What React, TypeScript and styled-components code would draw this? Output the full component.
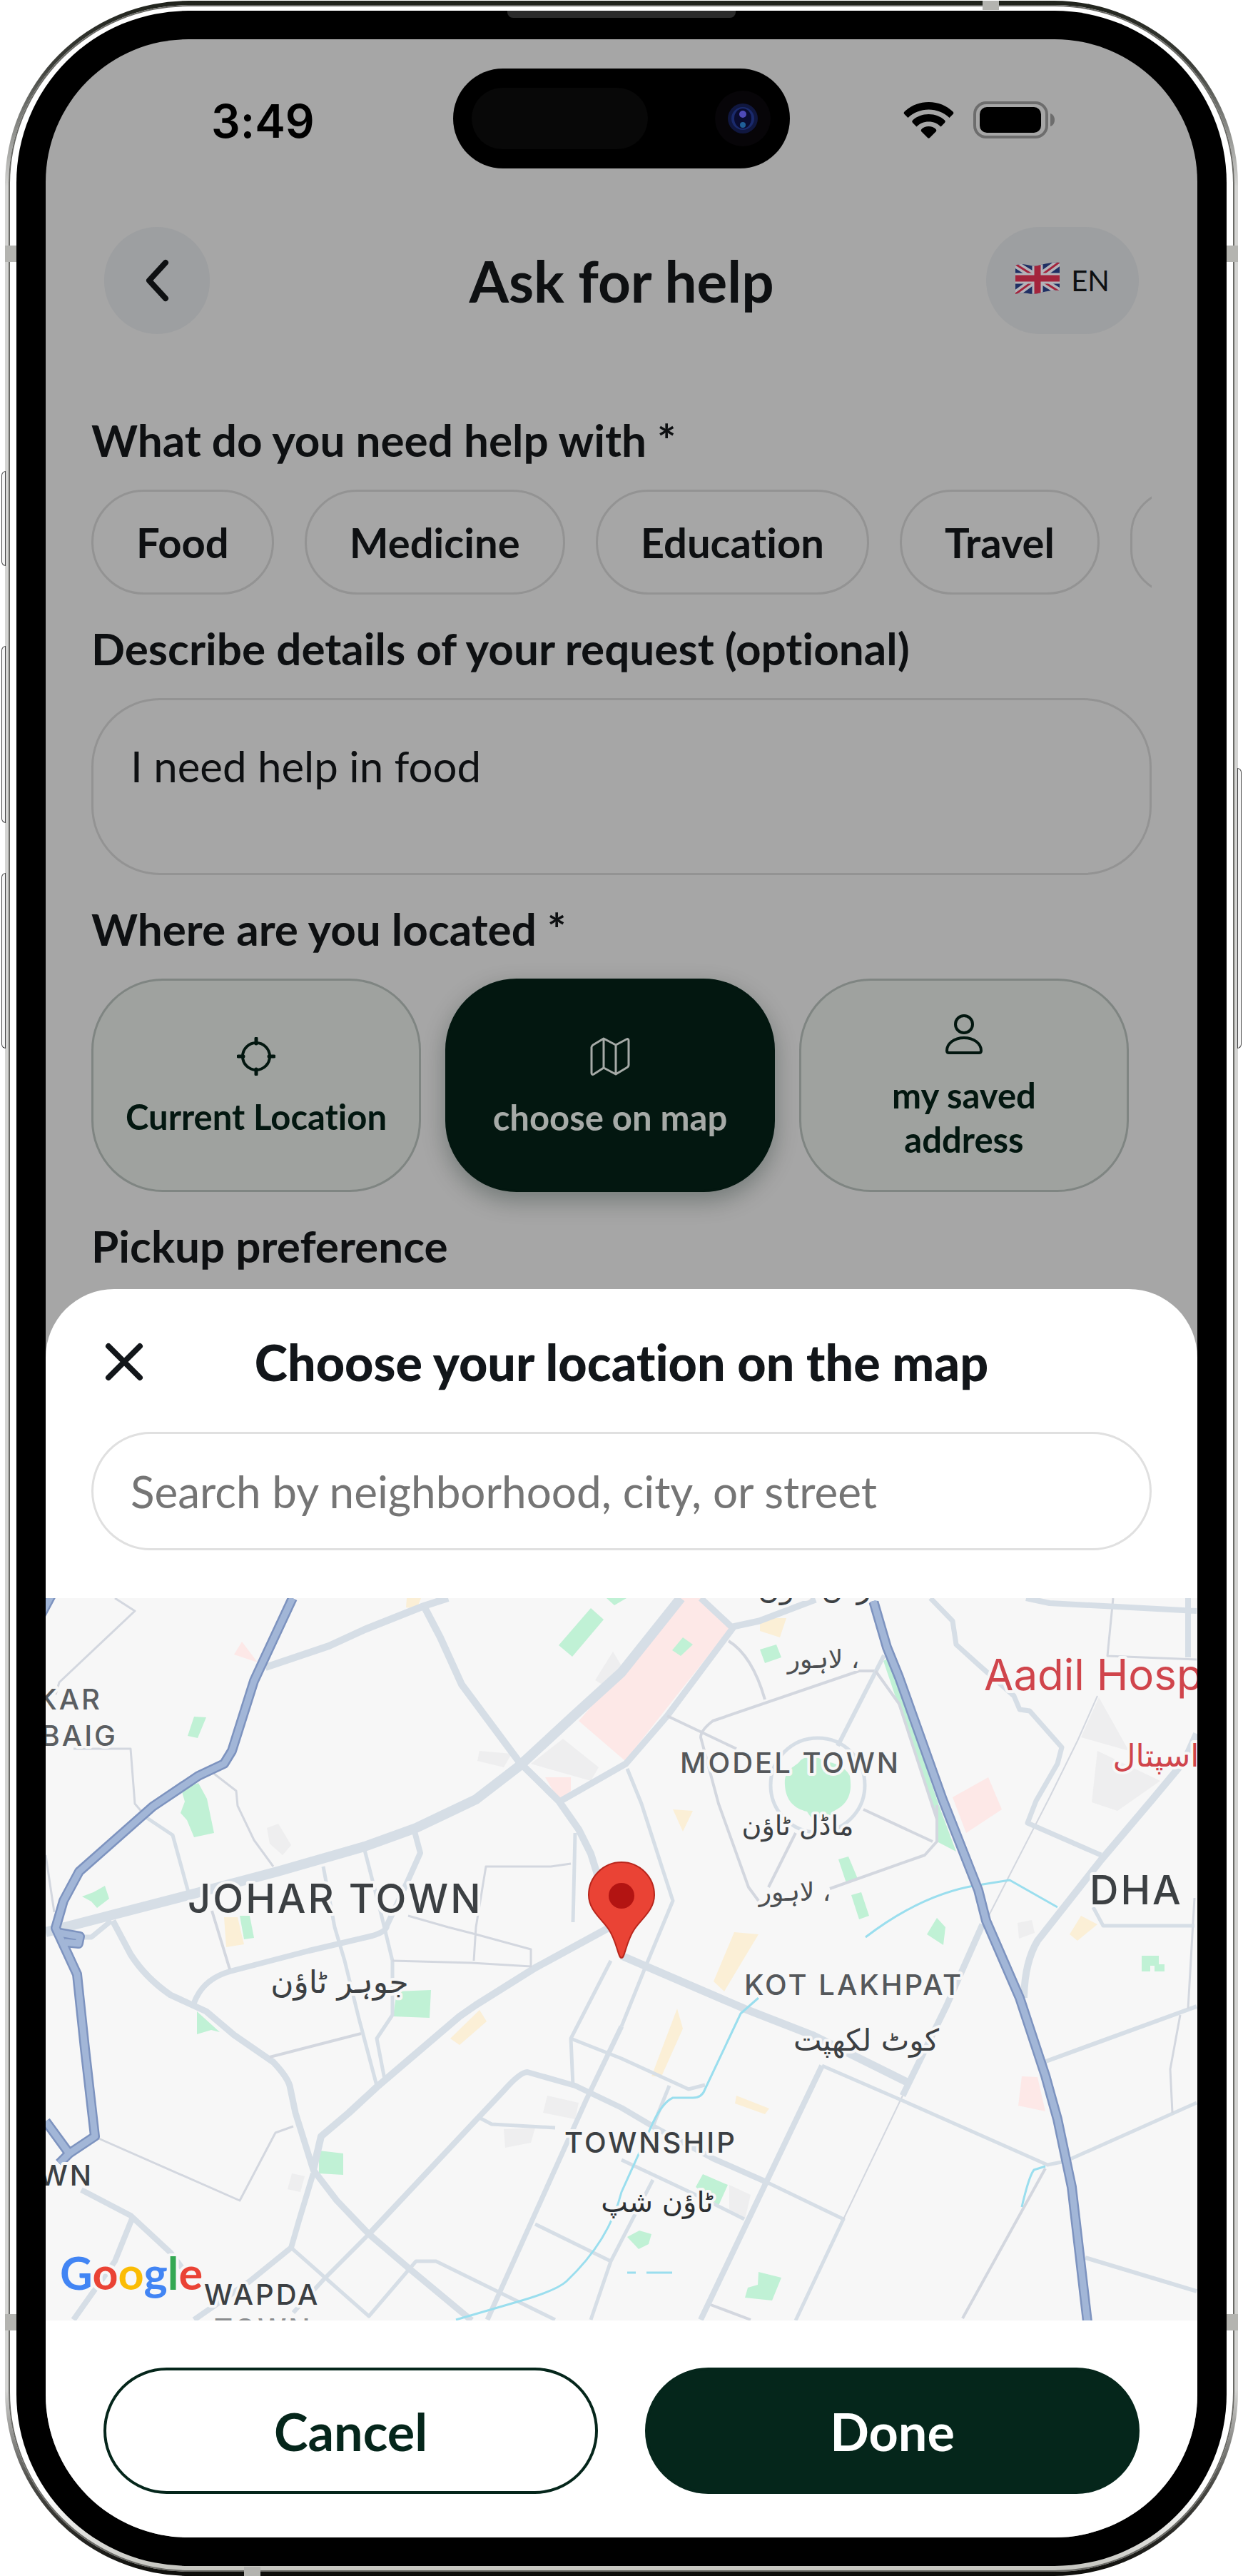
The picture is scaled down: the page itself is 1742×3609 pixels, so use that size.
import React, { FC, useState } from 'react'
import styled, { createGlobalStyle, css } from 'styled-components'

const GlobalStyle = createGlobalStyle`
    * {
        box-sizing: border-box;
    }

    body {
        margin: 0;
        background: #fff;
        font-family: Lato, 'Open Sans', sans-serif;
        font-variant-ligatures: none;
    }

    button,
    input,
    textarea {
        margin: 0;
        font-family: inherit;
        font-variant-ligatures: inherit;
    }
`

const Page = styled.main`
    padding: 1px 7px;
`

const Phone = styled.div`
    position: relative;
    padding: 6px 5px;
    border-radius: 258px;
    background: linear-gradient(
        180deg,
        #20231c 0,
        #3b3d38 90px,
        #d4d4d2 260px,
        #d4d4d2 calc(100% - 260px),
        #4a4a46 calc(100% - 130px),
        #0d0d0a 100%
    );
`

const Rail = styled.div`
    padding: 8px 11px;
    border-radius: 252px;
    background: linear-gradient(180deg, #fff 0, #fff 97%, #c4c4be 100%);
    box-shadow: inset 0 0 0 2px #6a6a66;
`

const Bezel = styled.div`
    position: relative;
    padding: 40px 41px;
    border-radius: 241px;
    background: #000;
`

const Earpiece = styled.div`
    position: absolute;
    top: 0;
    left: 50%;
    width: 320px;
    height: 10px;
    margin-left: -160px;
    border-radius: 0 0 8px 8px;
    background: #2b2b2b;
`

const SideButton = styled.span<{ $side: 'left' | 'right'; $top: number; $size: number }>`
    position: absolute;
    ${({ $side }) => $side}: -5px;
    top: ${({ $top }) => $top}px;
    width: 6px;
    height: ${({ $size }) => $size}px;
    border: 1px solid #444;
    border-radius: ${({ $side }) => ($side === 'left' ? '6px 0 0 6px' : '0 6px 6px 0')};
    background: #f4f4f4;
`

const Band = styled.span<{ $edge: 'left' | 'right' | 'top' | 'bottom'; $at: string }>`
    position: absolute;
    background: #b4b4b0;
    ${({ $edge, $at }) =>
        $edge === 'left' || $edge === 'right'
            ? css`
                  ${$edge}: 0;
                  top: ${$at};
                  width: 16px;
                  height: 23px;
              `
            : css`
                  ${$edge}: 0;
                  left: ${$at};
                  width: 23px;
                  height: 13px;
              `}
`

const Screen = styled.div`
    overflow: hidden;
    border-radius: 200px;
    background: #a6a6a6;
    color: #0e1012;
`

const StatusBar = styled.div`
    display: grid;
    grid-template-columns: 1fr 472px 1fr;
    align-items: center;
    padding-top: 41px;
`

const Clock = styled.time`
    padding: 8px 0 0 232px;
    font-family: Inter, sans-serif;
    font-size: 64px;
    font-weight: 600;
    line-height: 76px;
    color: #000;
`

const Island = styled.div`
    display: flex;
    align-items: center;
    justify-content: space-between;
    height: 140px;
    padding: 0 26px;
    border-radius: 70px;
    background: #000;
`

const Sensor = styled.span`
    width: 247px;
    height: 86px;
    border-radius: 43px;
    background: #080808;
`

const StatusIcons = styled.div`
    display: flex;
    align-items: center;
    justify-content: flex-end;
    gap: 27px;
    padding: 4px 199px 0 0;
`

const Header = styled.header`
    display: grid;
    grid-template-columns: 214px 1fr 214px;
    align-items: center;
    padding: 82px 82px 0;
`

const BackButton = styled.button`
    display: flex;
    align-items: center;
    justify-content: center;
    width: 148px;
    height: 150px;
    padding: 0;
    border: 0;
    border-radius: 75px;
    background: #9d9fa1;
`

const Title = styled.h1`
    margin: 0;
    text-align: center;
    font-size: 80px;
    font-weight: 700;
    line-height: 90px;
`

const LanguageButton = styled.button`
    display: flex;
    align-items: center;
    justify-content: center;
    gap: 16px;
    height: 150px;
    padding: 0;
    border: 0;
    border-radius: 75px;
    background: #9d9fa1;
    color: #0e1012;
    font-size: 40px;
`

const Form = styled.form`
    display: flex;
    flex-direction: column;
    gap: 37px;
    padding: 110px 64px 23px;
`

const Field = styled.section`
    display: flex;
    flex-direction: column;
    gap: 32px;
`

const labelText = css`
    margin: 0;
    font-size: 62px;
    font-weight: 700;
    line-height: 76px;
`

const Label = styled.label`
    ${labelText}
`

const Legend = styled.h2`
    ${labelText}
`

const ChipRow = styled.div`
    display: flex;
    gap: 43px;
    overflow: hidden;
`

const Chip = styled.button`
    flex: none;
    height: 147px;
    padding: 0 60px;
    border: 3px solid #939393;
    border-radius: 74px;
    background: transparent;
    color: #0e1012;
    font-size: 58px;
    font-weight: 700;
`

const Details = styled.textarea`
    display: block;
    width: 100%;
    height: 248px;
    padding: 54px 52px;
    border: 3px solid #939393;
    border-radius: 96px;
    outline: 0;
    resize: none;
    background: transparent;
    color: #0e1012;
    font-size: 60px;
    line-height: 76px;
`

const PlaceRow = styled.div`
    display: grid;
    grid-template-columns: repeat(3, 1fr);
    gap: 34px;
    padding-right: 32px;
`

const PlaceCard = styled.button<{ $active: boolean }>`
    display: flex;
    flex-direction: column;
    align-items: center;
    justify-content: center;
    gap: 26px;
    height: 299px;
    padding: 6px 0 0;
    border: 3px solid ${({ $active }) => ($active ? '#031710' : '#7f8582')};
    border-radius: 100px;
    background: ${({ $active }) => ($active ? '#031710' : '#9fa29f')};
    box-shadow: ${({ $active }) => ($active ? '0 12px 32px rgba(3, 23, 16, 0.3)' : 'none')};
    color: ${({ $active }) => ($active ? '#a6aaa7' : '#031710')};
    font-size: 49px;
    font-weight: 700;
    line-height: 62px;
    white-space: pre-line;
`

const Sheet = styled.section`
    padding: 64px 0 61px;
    border-radius: 96px 96px 0 0;
    background: #fff;
`

const SheetHeader = styled.div`
    display: grid;
    grid-template-columns: 56px 1fr 56px;
    align-items: center;
    padding: 0 82px;
`

const CloseButton = styled.button`
    display: flex;
    padding: 0;
    border: 0;
    background: none;
`

const SheetTitle = styled.h2`
    margin: 0;
    text-align: center;
    font-size: 70px;
    font-weight: 900;
    line-height: 76px;
    color: #12161a;
`

const SearchBox = styled.div`
    padding: 60px 64px 67px;
`

const SearchInput = styled.input`
    display: block;
    width: 100%;
    height: 166px;
    padding: 0 52px;
    border: 3px solid #e0e0e0;
    border-radius: 83px;
    outline: 0;
    background: #fff;
    color: #12161a;
    font-size: 62px;

    &::placeholder {
        color: #757575;
        opacity: 1;
    }
`

const MapView = styled.div`
    height: 1012px;
    background: #f7f7f7;

    svg {
        display: block;
        width: 100%;
        height: 100%;
    }
`

const MapText = styled.text<{ $size: number; $color: string }>`
    font-family: Inter, sans-serif;
    font-size: ${({ $size }) => $size}px;
    font-weight: 500;
    letter-spacing: 3px;
    fill: ${({ $color }) => $color};
    stroke: #f7f7f7;
    stroke-width: 8px;
    stroke-linejoin: round;
    paint-order: stroke;
`

const UrduText = styled(MapText)`
    font-family: 'DejaVu Sans', sans-serif;
    font-weight: 400;
    letter-spacing: 0;
    direction: rtl;
    text-anchor: middle;
`

const Hospital = styled(MapText)`
    font-weight: 400;
    letter-spacing: 0;
`

const Wordmark = styled(MapText)`
    font-family: Lato, sans-serif;
    font-weight: 700;
    letter-spacing: 0;
`

const Actions = styled.div`
    display: grid;
    grid-template-columns: 1fr 1fr;
    gap: 66px;
    padding: 66px 81px 0;
`

const ActionButton = styled.button<{ $primary?: boolean }>`
    height: 177px;
    padding: 0;
    border: 4px solid #05261b;
    border-radius: 89px;
    background: ${({ $primary }) => ($primary ? '#05261b' : '#fff')};
    color: ${({ $primary }) => ($primary ? '#fff' : '#05261b')};
    font-size: 72px;
    font-weight: 700;
`

const CameraIcon = () => (
    <svg width="80" height="80" viewBox="0 0 80 80" aria-hidden="true">
        <circle cx="40" cy="40" r="39" fill="#070508" />
        <circle cx="40" cy="40" r="21" fill="#10173f" />
        <circle cx="40" cy="40" r="16" fill="#1a2a6c" />
        <ellipse cx="40" cy="40" rx="12" ry="14" fill="#0a0c30" />
        <circle cx="40" cy="34" r="5" fill="#4f4ab8" />
        <circle cx="40" cy="49" r="4" fill="#1f5f98" />
    </svg>
)

const WifiIcon = () => (
    <svg width="71" height="51" viewBox="0 0 71 51" aria-hidden="true">
        <path
            d="M35.500 0C49 0 60.500 5 69.500 13.500a2.500 2.500 0 0 1 0 3.500l-5 5C56.500 14.500 46.500 10.500 35.500 10.500S14.500 14.500 6.500 22l-5-5a2.500 2.500 0 0 1 0-3.500C10.500 5 22 0 35.500 0z"
        />
        <path d="M35.500 17c9 0 16.500 3 22.500 8.500a2.500 2.500 0 0 1 0 3.500l-5.500 5.500C48 30 42.500 27.500 35.500 27.500S23 30 18.500 34.500L13 29a2.500 2.500 0 0 1 0-3.500C19 20 26.500 17 35.500 17z" />
        <path d="M35.500 34c4 0 7.500 1.500 10 4 1 1 1 2.500 0 3.500L37 50a2.200 2.200 0 0 1-3 0l-8.500-8.500c-1-1-1-2.500 0-3.500 2.500-2.500 6-4 10-4z" />
    </svg>
)

const BatteryIcon = () => (
    <svg width="115" height="52" viewBox="0 0 115 52" aria-hidden="true">
        <rect x="2" y="2" width="101" height="48" rx="16" fill="none" stroke="#6d6d6d" strokeWidth="4" />
        <rect x="9" y="8" width="86" height="36" rx="10" />
        <path d="M108 17c4 1 6 5 6 9s-2 8-6 9z" fill="#6d6d6d" />
    </svg>
)

const BackIcon = () => (
    <svg width="34" height="60" viewBox="0 0 34 60" aria-hidden="true">
        <path
            d="M29 5 6 30l23 25"
            fill="none"
            stroke="#0e1012"
            strokeWidth="8"
            strokeLinecap="round"
            strokeLinejoin="round"
        />
    </svg>
)

const FlagIcon = () => (
    <svg width="62" height="52" viewBox="0 0 62 52" aria-hidden="true">
        <clipPath id="flag">
            <path d="M0 5c12-6 20 3 32 0S52 0 62 1v39c-10-1-18 1-30 4S12 40 0 45z" />
        </clipPath>
        <g clipPath="url(#flag)">
            <path d="M0 0h62v46H0z" fill="#1f2f63" />
            <path d="m0 3 62 39M62 0 0 45" stroke="#b4b2b8" strokeWidth="10" />
            <path d="m0 3 62 39M62 0 0 45" stroke="#a3243c" strokeWidth="3" />
            <path d="M31 0v46M0 23h62" stroke="#b4b2b8" strokeWidth="15" />
            <path d="M31 0v46M0 23h62" stroke="#a3243c" strokeWidth="9" />
        </g>
    </svg>
)

const CrosshairIcon = () => (
    <svg width="54" height="54" viewBox="0 0 54 54" fill="none" stroke="currentColor" aria-hidden="true">
        <circle cx="27" cy="27" r="19" strokeWidth="4" />
        <path d="M27 2v7M27 45v7M2 27h7M45 27h7" strokeWidth="5" strokeLinecap="round" />
    </svg>
)

const MapIcon = () => (
    <svg width="56" height="56" viewBox="0 0 56 56" fill="none" stroke="currentColor" aria-hidden="true">
        <path
            d="M19 3 4 12c-1 1-2 2-2 3v36c0 2 1 3 3 2l14-9 17 9 15-9c2-1 3-2 3-4V6c0-2-1-3-3-2l-15 8zM19 3v41M36 12v41"
            strokeWidth="3"
            strokeLinejoin="round"
        />
    </svg>
)

const PersonIcon = () => (
    <svg width="54" height="56" viewBox="0 0 54 56" fill="none" stroke="currentColor" aria-hidden="true">
        <circle cx="27" cy="14" r="12" strokeWidth="4" />
        <path
            d="M27 33c14 0 24 8 24 18 0 2-1 3-3 3H6c-2 0-3-1-3-3 0-10 10-18 24-18z"
            strokeWidth="4"
            strokeLinejoin="round"
        />
    </svg>
)

const CloseIcon = () => (
    <svg width="56" height="56" viewBox="0 0 56 56" aria-hidden="true">
        <path d="m6 6 44 44M50 6 6 50" stroke="#12161a" strokeWidth="8" strokeLinecap="round" />
    </svg>
)

const places = [
    { id: 'current', name: 'Current Location', icon: <CrosshairIcon /> },
    { id: 'map', name: 'choose on map', icon: <MapIcon /> },
    { id: 'saved', name: 'my saved\naddress', icon: <PersonIcon /> },
]

const parks = [
    'M764 14l18 16-44 52-19-16z',
    'M786 0h28l-17 10z',
    'M208 166l17 1-12 29-14-3z',
    'M190 268l24-9 12 22 10 48-28 6-10-24-9-10 6-16z',
    'M51 418l16-6 16-9 6 18-17 13-8-9z',
    'M272 445h14l6 31-14 2z',
    'M492 551l48-2-2 39-51-2z',
    'M212 579l32 29-12-3-20 6z',
    'M383 774l34 4v30l-34-2z',
    'M893 55l14 10-17 16-12-8z',
    'M1001 72l23-7 7 18-23 8z',
    'M1174 88l8-5 69 205 25 67-27-14v-31z',
    'M1036 262c-2-24 16-25 22-35 12-8 22-8 32 2 12 0 30 6 37 20 4 24-2 40-24 50-10 18-24 20-36 0-18-4-30-16-31-37z',
    'M1111 366l14-4 13 31-16 6z',
    'M1129 416l14-4 11 33-14 5z',
    'M1249 448l12 13-3 25-23-15z',
    'M1536 501h24v12h8v10h-14v-8h-6v8h-12z',
    'M921 807l35 15-13 29-32-26z',
    'M815 895l17-9 17 5-4 14-14 7z',
    'M999 944l32 8-13 32-38-4 4-14 14-4z',
]

const blocks = [
    { color: '#fde8e7', d: 'M890 0h28l44 38-150 190-65-56 60-68z' },
    { color: '#fde8e7', d: 'M275 61l22 29-33-11z' },
    { color: '#fde8e7', d: 'M1271 279l50-28 19 45-50 33z' },
    { color: '#fde8e7', d: 'M1368 670l22 1 11 48-38-8z' },
    { color: '#fbefd6', d: 'M965 468l34 3-48 80-15-14z' },
    { color: '#fbefd6', d: 'M885 575l8 28-30 67h-14z' },
    { color: '#fbefd6', d: 'M879 296l28 2-14 29z' },
    { color: '#fbefd6', d: 'M1001 28h37l-9 27-28-9z' },
    { color: '#fbefd6', d: 'M250 447h19l9 38-25 4z' },
    { color: '#fbefd6', d: 'M608 577l10 16-38 33-13-9z' },
    { color: '#fbefd6', d: 'M968 697l46 18-6 8-42-15z' },
    { color: '#fbefd6', d: 'M1451 445l23 12-28 23-11-9z' },
    { color: '#fbefd6', d: 'M506 0h20l-6 15-15-2z' },
    { color: '#eeeeef', d: 'M725 197l50 40-11 19-84-24z' },
    { color: '#fde8e7', d: 'M700 251h36v19l-17 13z' },
    { color: '#eeeeef', d: 'M608 214l45 4-11 19-37-9z' },
    { color: '#eeeeef', d: 'M770 115l25-40 12 20-20 30z' },
    { color: '#eeeeef', d: 'M1476 139l42 75-67-19z' },
    { color: '#eeeeef', d: 'M1474 214l88 42-60 42-36-12z' },
    { color: '#eeeeef', d: 'M703 697l44 10-5 23-45-9z' },
    { color: '#eeeeef', d: 'M642 744l44-2-6 21-36 7z' },
    { color: '#eeeeef', d: 'M310 322l16-6 18 30-12 14-18-16z' },
    { color: '#eeeeef', d: 'M1362 455l20-4 4 18-22 8z' },
    { color: '#eeeeef', d: 'M958 822l30 14-8 34-22-12z' },
    { color: '#eeeeef', d: 'M345 806l18 4-6 22-18-4z' },
]

const roads = [
    { width: 14, d: 'M0 468L208 414 325 383 447 348 519 322 603 282 664 235 742 163 807 104 890 0' },
    { width: 10, d: 'M564 0L530 11 447 44 397 67 308 97' },
    { width: 10, d: 'M530 11L553 55 583 121 664 230 719 284 747 324 764 358 774 390' },
    { width: 9, d: 'M722 284L813 232 871 165 963 42 918 0M963 40L1000 32 1079 2' },
    { width: 10, d: 'M800 456L686 518 603 570 580 586 464 685 425 721 386 754 375 801' },
    { width: 9, d: 'M94 452L119 499 Q140 532 175 556L225 579 264 612 319 650 Q338 670 342 683L350 721 375 801 408 844 453 891 508 938 597 1012' },
    { width: 7, d: 'M47 475H64L92 452' },
    { width: 8, d: 'M375 806L355 872 344 910 286 957 208 1011' },
    { width: 8, d: 'M208 567Q220 534 258 523L369 494 458 473Q478 467 478 459L508 395 525 357 517 327' },
    { width: 5, d: 'M389 376L405 461 419 508 439 589 464 683' },
    { width: 5, d: 'M447 353L469 438 486 508 486 584 464 617 475 674' },
    { width: 3, d: 'M486 508L597 511 680 516V492L603 471 564 461 508 445M600 508L603 461 617 376H708L736 372' },
    { width: 5, d: 'M742 329L739 454' },
    { width: 4, d: 'M314 643L442 610M233 438L258 520' },
    { width: 3, d: 'M236 246L267 270 269 291 292 339 319 376M39 211H119L125 288 142 308' },
    { width: 5, d: 'M142 308L178 332 200 412' },
    { width: 3, d: 'M97 0L125 18 19 118 14 135M0 360L12 440' },
    { width: 8, d: 'M453 891L608 726 642 690Q665 664 675 664L742 683 807 714 851 740 935 785 1010 818' },
    { width: 5, d: 'M1010 818L1118 870 1051 1012M608 728L625 737 714 742' },
    { width: 6, d: 'M453 891L392 952 347 1001' },
    { width: 5, d: 'M344 910L453 1006 519 929H547L714 1011' },
    { width: 8, d: 'M50 829L119 865 175 917 200 950M122 867L97 929 39 1011' },
    { width: 3, d: 'M72 756L272 844 322 749 347 740' },
    { width: 11, d: 'M807 501L979 575 1074 612 1207 678' },
    { width: 9, d: 'M1313 457L1263 570 1201 697' },
    { width: 2, d: 'M1201 697L1118 870M1318 452L1407 279 1446 200 1474 137' },
    { width: 5, d: 'M1088 655L1201 704 1404 794 1429 789 1613 707' },
    { width: 8, d: 'M1088 655L1010 818 918 1011' },
    { width: 6, d: 'M1399 650L1613 572M1457 924L1613 971' },
    { width: 3, d: 'M1590 584L1576 660 1579 721M1610 420L1601 575M1496 0L1488 81 1613 86' },
    { width: 10, d: 'M1613 190L1596 228 1551 282 1479 367 1390 480Q1372 510 1371 560' },
    { width: 7, d: 'M1479 360L1376 315 1388 284 1418 232 1424 209 1379 158 1365 156 1357 137 1307 93 1276 65 1271 32 1240 0' },
    { width: 8, d: 'M1374 0L1407 7 1613 18M1601 0V83' },
    { width: 5, d: 'M1468 433L1482 459H1610' },
    { width: 4, d: 'M957 60Q990 80 1008 142M1163 102H1140L935 172Q918 185 918 195L943 288 985 405 999 424' },
    { width: 4, d: 'M871 165L968 211M1146 296L1243 341M1249 290V341L1232 360 1099 407M1051 329L1013 405' },
    { width: 6, d: 'M1175 80L1110 207' },
    { width: 4, d: 'M1163 102L1196 148 1249 310' },
    { width: 5, d: 'M815 239L835 288 865 381 879 424 840 518 807 600' },
    { width: 7, d: 'M807 600L758 702 619 1011' },
    { width: 5, d: 'M792 508L736 617 739 683M736 617L807 645 901 688 924 682' },
    { width: 5, d: 'M686 877L792 929 764 1011M874 683L851 740M807 787L907 834 979 870M851 815L792 929' },
    { width: 4, d: 'M932 990L988 1011M1401 799L1285 1009' },
]

const highways = [
    'M346 0L305 88 292 116 261 214 250 232 214 249 150 292 47 383 25 424 14 462 44 527 55 631 69 754 33 778 19 792',
    'M14 468L48 474 46 484 26 482M0 733L33 778M-10 30L8 -4',
    'M1160 4L1179 69 1196 111 1257 282 1307 409 1318 452 1365 560 1401 669 1418 730 1438 825 1449 919 1460 1014',
]

const water = [
    'M999 560L974 582 924 688Q920 700 907 700H879Q865 706 851 735L807 832Q790 900 730 957 716 970 664 985L575 1011',
    'M1149 475Q1229 414 1307 402L1351 395 1418 433',
    'M1401 796L1385 801Q1378 810 1368 853',
    'M815 945h12M842 945h36',
]

const LahoreMap: FC = () => (
    <svg viewBox="0 0 1614 1012" preserveAspectRatio="xMidYMid slice" role="img" aria-label="Map of Lahore">
        {blocks.map(({ color, d }) => (
            <path key={d} d={d} fill={color} />
        ))}
        {parks.map((d) => (
            <path key={d} d={d} fill="#c0f1d5" />
        ))}
        <circle cx="1082" cy="262" r="66" fill="none" stroke="#d6dee6" strokeWidth="5" />
        <g fill="none" strokeLinejoin="round">
            {roads.map(({ width, d }) => (
                <path key={d} d={d} stroke={width < 5 ? '#d3d7df' : '#d6dee6'} strokeWidth={width} />
            ))}
            {water.map((d) => (
                <path key={d} d={d} stroke="#9adeee" strokeWidth="3" />
            ))}
            {highways.map((d) => (
                <path key={d} d={d} stroke="#7d93bf" strokeWidth="14" />
            ))}
            {highways.map((d) => (
                <path key={d} d={d} stroke="#a2b6d7" strokeWidth="9" />
            ))}
        </g>
        <MapText x="79" y="156" textAnchor="end" $size={40} $color="#5b5e61">KAR</MapText>
        <MapText x="101" y="207" textAnchor="end" $size={40} $color="#5b5e61">BAIG</MapText>
        <MapText x="199" y="441" $size={56} $color="#3c4043">JOHAR TOWN</MapText>
        <MapText x="889" y="245" $size={40} $color="#55585b">MODEL TOWN</MapText>
        <MapText x="979" y="556" $size={40} $color="#55585b">KOT LAKHPAT</MapText>
        <MapText x="727" y="777" $size={40} $color="#3c4043">TOWNSHIP</MapText>
        <MapText x="1463" y="429" $size={56} $color="#3c4043">DHA</MapText>
        <MapText x="67" y="823" textAnchor="end" $size={40} $color="#3c4043">WN</MapText>
        <MapText x="222" y="990" $size={40} $color="#3c4043">WAPDA</MapText>
        <MapText x="236" y="1038" $size={40} $color="#8a8c8e">TOWN</MapText>
        <Hospital x="1315" y="129" $size={60} $color="#d0454c">Aadil Hosp</Hospital>
        <UrduText x="1556" y="236" $size={44} $color="#d0454c">اسپتال</UrduText>
        <UrduText x="1094" y="0" $size={42} $color="#3c4043">گارڈن ٹاؤن</UrduText>
        <UrduText x="1090" y="98" $size={36} $color="#4c4f52">، لاہور</UrduText>
        <UrduText x="1054" y="332" $size={38} $color="#3c4043">ماڈل ٹاؤن</UrduText>
        <UrduText x="1050" y="424" $size={36} $color="#4c4f52">، لاہور</UrduText>
        <UrduText x="412" y="553" $size={44} $color="#3c4043">جوہر ٹاؤن</UrduText>
        <UrduText x="1150" y="634" $size={42} $color="#3c4043">کوٹ لکھپت</UrduText>
        <UrduText x="857" y="860" $size={40} $color="#2c2f32">ٹاؤن شپ</UrduText>
        <Wordmark x="20" y="969" $size={63} $color="#4285f4">
            G<tspan fill="#ea4335">o</tspan>
            <tspan fill="#fbbc05">o</tspan>
            <tspan>g</tspan>
            <tspan fill="#34a853">l</tspan>
            <tspan fill="#ea4335">e</tspan>
        </Wordmark>
        <path
            d="M807 504c-5 0-6-22-18-40-10-15-28-27-28-48a46 46 0 0 1 92 0c0 21-18 33-28 48-12 18-13 40-18 40z"
            fill="#ea4335"
            stroke="#b8261c"
            strokeWidth="2"
        />
        <circle cx="807" cy="417" r="18" fill="#b31412" />
    </svg>
)

const App: FC = () => {
    const [details, setDetails] = useState('I need help in food')
    const [place, setPlace] = useState('map')
    const [query, setQuery] = useState('')

    return (
        <Page>
            <GlobalStyle />
            <Phone>
                <SideButton $side="left" $top={659} $size={133} />
                <SideButton $side="left" $top={904} $size={248} />
                <SideButton $side="left" $top={1222} $size={246} />
                <SideButton $side="right" $top={1075} $size={393} />
                <Rail>
                    <Band $edge="left" $at="343px" />
                    <Band $edge="right" $at="343px" />
                    <Band $edge="left" $at="calc(100% - 367px)" />
                    <Band $edge="right" $at="calc(100% - 367px)" />
                    <Band $edge="top" $at="calc(100% - 358px)" />
                    <Band $edge="bottom" $at="335px" />
                    <Bezel>
                        <Earpiece />
                        <Screen>
                            <StatusBar>
                                <Clock>3:49</Clock>
                                <Island>
                                    <Sensor />
                                    <CameraIcon />
                                </Island>
                                <StatusIcons>
                                    <WifiIcon />
                                    <BatteryIcon />
                                </StatusIcons>
                            </StatusBar>
                            <Header>
                                <BackButton aria-label="Back">
                                    <BackIcon />
                                </BackButton>
                                <Title>Ask for help</Title>
                                <LanguageButton>
                                    <FlagIcon />
                                    EN
                                </LanguageButton>
                            </Header>
                            <Form>
                                <Field>
                                    <Legend>What do you need help with *</Legend>
                                    <ChipRow>
                                        <Chip type="button">Food</Chip>
                                        <Chip type="button">Medicine</Chip>
                                        <Chip type="button">Education</Chip>
                                        <Chip type="button">Travel</Chip>
                                        <Chip type="button" aria-label="More" />
                                    </ChipRow>
                                </Field>
                                <Field>
                                    <Label htmlFor="details">Describe details of your request (optional)</Label>
                                    <Details
                                        id="details"
                                        value={details}
                                        onChange={({ target: { value } }) => setDetails(value)}
                                    />
                                </Field>
                                <Field>
                                    <Legend>Where are you located *</Legend>
                                    <PlaceRow>
                                        {places.map(({ id, name, icon }) => (
                                            <PlaceCard
                                                key={id}
                                                type="button"
                                                $active={place === id}
                                                onClick={() => setPlace(id)}
                                            >
                                                {icon}
                                                {name}
                                            </PlaceCard>
                                        ))}
                                    </PlaceRow>
                                </Field>
                                <Legend>Pickup preference</Legend>
                            </Form>
                            <Sheet>
                                <SheetHeader>
                                    <CloseButton aria-label="Close">
                                        <CloseIcon />
                                    </CloseButton>
                                    <SheetTitle>Choose your location on the map</SheetTitle>
                                </SheetHeader>
                                <SearchBox>
                                    <SearchInput
                                        aria-label="Search"
                                        placeholder="Search by neighborhood, city, or street"
                                        value={query}
                                        onChange={({ target: { value } }) => setQuery(value)}
                                    />
                                </SearchBox>
                                <MapView>
                                    <LahoreMap />
                                </MapView>
                                <Actions>
                                    <ActionButton>Cancel</ActionButton>
                                    <ActionButton $primary>Done</ActionButton>
                                </Actions>
                            </Sheet>
                        </Screen>
                    </Bezel>
                </Rail>
            </Phone>
        </Page>
    )
}

export default App
